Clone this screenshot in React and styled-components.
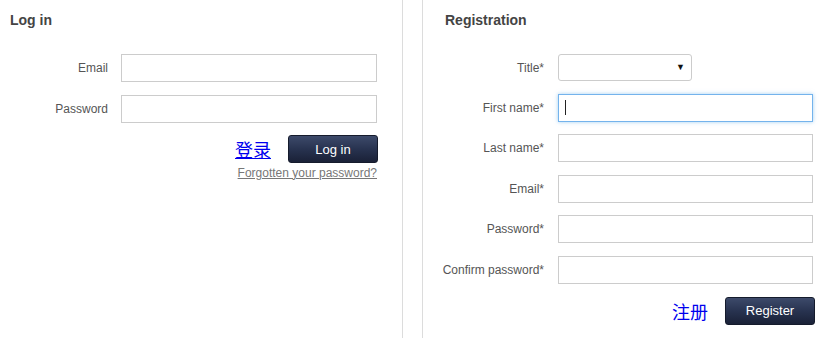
import React from "react";
import styled, { createGlobalStyle } from "styled-components";

const GlobalStyle = createGlobalStyle`
 html, body {
  margin: 0;
  padding: 0;
  background: #fff;
 }
 body {
  font-family: "Liberation Sans", Arial, "Noto Sans CJK SC", sans-serif;
  color: #555;
 }
`;

const Page = styled.div`
 display: flex;
 gap: 19px;
 height: 338px;
 overflow: hidden;
`;

const Column = styled.section`
 width: ${(p) => p.width}px;
 padding-left: ${(p) => p.padLeft}px;
 box-sizing: border-box;
 border-left: ${(p) => (p.side === "right" ? "1px solid #dcdcdc" : "none")};
 border-right: ${(p) => (p.side === "left" ? "1px solid #dcdcdc" : "none")};
`;

const Heading = styled.h2`
 margin: 10px 0 0 ${(p) => p.indent || 0}px;
 font-size: 14px;
 line-height: 20px;
 font-weight: bold;
 color: #444;
`;

const FormGrid = styled.div`
 display: grid;
 grid-template-columns: ${(p) => p.labelWidth}px ${(p) => p.fieldWidth}px;
 column-gap: ${(p) => p.gap}px;
 row-gap: 12.6px;
 margin-top: 24px;
 align-items: center;
`;

const Label = styled.label`
 justify-self: end;
 white-space: nowrap;
 font-size: 12px;
 color: #555;
`;

const Input = styled.input`
 box-sizing: border-box;
 width: 100%;
 height: 28px;
 margin: 0;
 padding: 0 6px;
 border: 1px solid ${(p) => (p.focused ? "#74b3ec" : "#cccccc")};
 box-shadow: ${(p) => (p.focused ? "0 0 4px rgba(102, 175, 233, 0.6)" : "none")};
 border-radius: 0;
 background: #fff;
 font-family: inherit;
 font-size: 12px;
 outline: none;
`;

const FieldWrap = styled.div`
 position: relative;
`;

const Caret = styled.span`
 position: absolute;
 left: 7px;
 top: 6px;
 width: 1px;
 height: 15px;
 background: #222;
`;

const SelectBox = styled.div`
 position: relative;
 width: 134px;
`;

const Select = styled.select`
 appearance: none;
 -webkit-appearance: none;
 box-sizing: border-box;
 width: 100%;
 height: 27px;
 margin: 0;
 border: 1px solid #cccccc;
 border-radius: 3px;
 background: #fff;
 font-family: inherit;
 font-size: 12px;
`;

const Arrow = styled.span`
 position: absolute;
 right: 7px;
 top: 7px;
 font-size: 9px;
 line-height: 12px;
 color: #111;
 pointer-events: none;
`;

const Actions = styled.div`
 grid-column: 2;
 display: flex;
 justify-content: flex-end;
 align-items: center;
 gap: 17px;
 margin-right: ${(p) => p.overhang}px;
`;

const ChineseLink = styled.a`
 font-family: "Noto Sans CJK SC", sans-serif;
 font-size: 18px;
 line-height: 22px;
 color: #0000ee;
 text-decoration: ${(p) => (p.underline ? "underline" : "none")};
`;

const Button = styled.button`
 width: 90px;
 height: 28px;
 padding: 0;
 border: 1px solid #151b2c;
 border-radius: 3px;
 background: linear-gradient(to bottom, #3d4a6a 0%, #283350 50%, #1a2137 100%);
 color: #fff;
 font-family: inherit;
 font-size: 13px;
 cursor: pointer;
`;

const Forgotten = styled.a`
 grid-column: 2;
 justify-self: end;
 margin-top: -10px;
 font-size: 12px;
 color: #777;
 text-decoration: underline;
`;

const loginFields = [
 { label: "Email", type: "text" },
 { label: "Password", type: "password" },
];

const registerFields = [
 { label: "First name*", type: "text", focused: true },
 { label: "Last name*", type: "text" },
 { label: "Email*", type: "text" },
 { label: "Password*", type: "password" },
 { label: "Confirm password*", type: "password" },
];

export default function App() {
 return (
  <>
   <GlobalStyle />
   <Page>
    {/* Log in column */}
    <Column side="left" width={403} padLeft={10}>
     <Heading>Log in</Heading>
     <FormGrid labelWidth={98} fieldWidth={256} gap={13}>
      {loginFields.map((field) => (
       <React.Fragment key={field.label}>
        <Label>{field.label}</Label>
        <Input type={field.type} />
       </React.Fragment>
      ))}
      <Actions overhang={-1}>
       <ChineseLink href="#" underline>
        登录
       </ChineseLink>
       <Button>Log in</Button>
      </Actions>
      <Forgotten href="#">Forgotten your password?</Forgotten>
     </FormGrid>
    </Column>

    {/* Registration column */}
    <Column side="right" width={405} padLeft={0}>
     <Heading indent={22}>Registration</Heading>
     <FormGrid labelWidth={121} fieldWidth={255} gap={14}>
      <Label>Title*</Label>
      <SelectBox>
       <Select defaultValue="">
        <option value=""></option>
        <option value="mr">Mr</option>
        <option value="mrs">Mrs</option>
       </Select>
       <Arrow>▼</Arrow>
      </SelectBox>
      {registerFields.map((field) => (
       <React.Fragment key={field.label}>
        <Label>{field.label}</Label>
        <FieldWrap>
         <Input type={field.type} focused={field.focused ? 1 : 0} />
         {field.focused && <Caret />}
        </FieldWrap>
       </React.Fragment>
      ))}
      <Actions overhang={-2}>
       <ChineseLink href="#">注册</ChineseLink>
       <Button>Register</Button>
      </Actions>
     </FormGrid>
    </Column>
   </Page>
  </>
 );
}
